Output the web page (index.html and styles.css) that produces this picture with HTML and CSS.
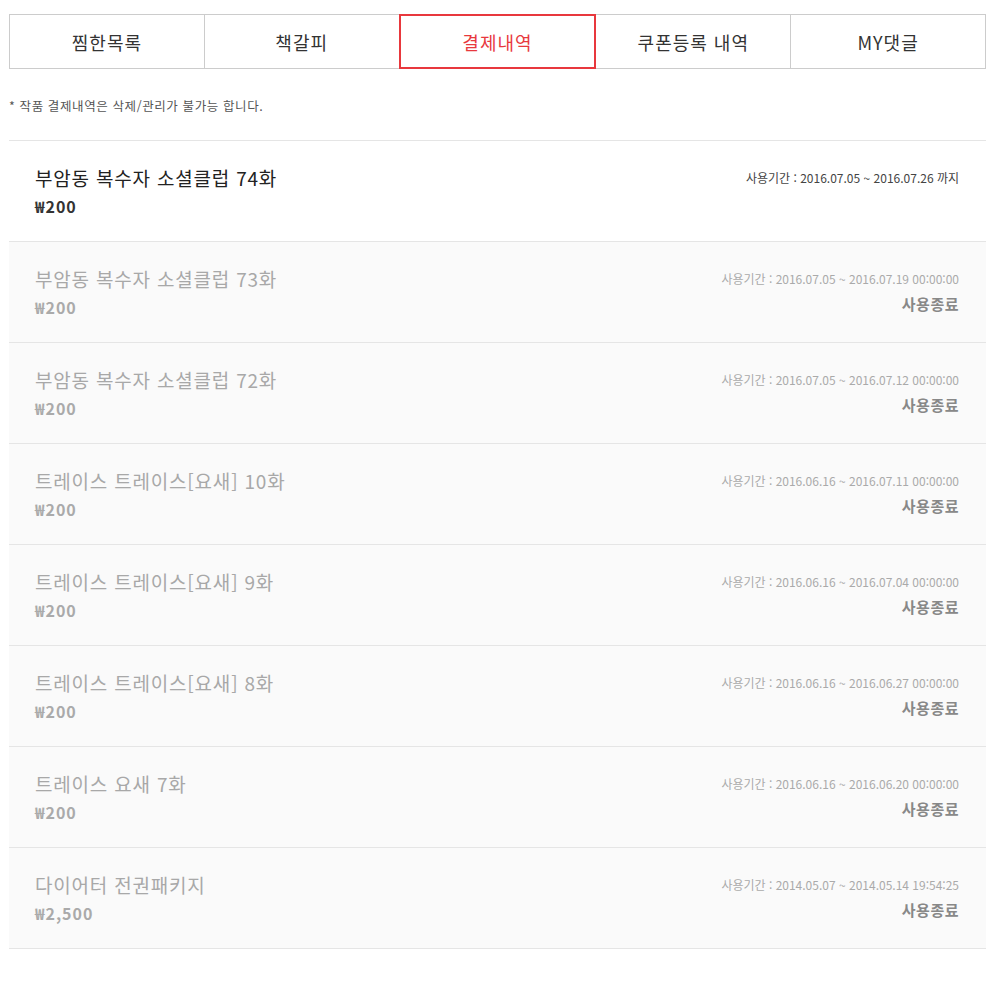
FILE: index.html
```html
<!DOCTYPE html>
<html lang="ko">
<head>
<meta charset="utf-8">
<link rel="stylesheet" href="styles.css">
</head>
<body>
<div class="wrap">
  <ul class="tabs">
    <li class="tab">찜한목록</li>
    <li class="tab">책갈피</li>
    <li class="tab active">결제내역</li>
    <li class="tab">쿠폰등록 내역</li>
    <li class="tab">MY댓글</li>
  </ul>
  <p class="note">* 작품 결제내역은 삭제/관리가 불가능 합니다.</p>
  <ul class="list">
    <li class="row current">
      <div class="left"><div class="title">부암동 복수자 소셜클럽 74화</div><div class="price">₩200</div></div>
      <div class="right"><div class="period">사용기간 : 2016.07.05 ~ 2016.07.26 까지</div></div>
    </li>
    <li class="row ended">
      <div class="left"><div class="title">부암동 복수자 소셜클럽 73화</div><div class="price">₩200</div></div>
      <div class="right"><div class="period">사용기간 : 2016.07.05 ~ 2016.07.19 00:00:00</div><div class="status">사용종료</div></div>
    </li>
    <li class="row ended">
      <div class="left"><div class="title">부암동 복수자 소셜클럽 72화</div><div class="price">₩200</div></div>
      <div class="right"><div class="period">사용기간 : 2016.07.05 ~ 2016.07.12 00:00:00</div><div class="status">사용종료</div></div>
    </li>
    <li class="row ended">
      <div class="left"><div class="title">트레이스 트레이스[요새] 10화</div><div class="price">₩200</div></div>
      <div class="right"><div class="period">사용기간 : 2016.06.16 ~ 2016.07.11 00:00:00</div><div class="status">사용종료</div></div>
    </li>
    <li class="row ended">
      <div class="left"><div class="title">트레이스 트레이스[요새] 9화</div><div class="price">₩200</div></div>
      <div class="right"><div class="period">사용기간 : 2016.06.16 ~ 2016.07.04 00:00:00</div><div class="status">사용종료</div></div>
    </li>
    <li class="row ended">
      <div class="left"><div class="title">트레이스 트레이스[요새] 8화</div><div class="price">₩200</div></div>
      <div class="right"><div class="period">사용기간 : 2016.06.16 ~ 2016.06.27 00:00:00</div><div class="status">사용종료</div></div>
    </li>
    <li class="row ended">
      <div class="left"><div class="title">트레이스 요새 7화</div><div class="price">₩200</div></div>
      <div class="right"><div class="period">사용기간 : 2016.06.16 ~ 2016.06.20 00:00:00</div><div class="status">사용종료</div></div>
    </li>
    <li class="row ended">
      <div class="left"><div class="title">다이어터 전권패키지</div><div class="price">₩2,500</div></div>
      <div class="right"><div class="period">사용기간 : 2014.05.07 ~ 2014.05.14 19:54:25</div><div class="status">사용종료</div></div>
    </li>
  </ul>
</div>
</body>
</html>
```

FILE: styles.css
```css
* { box-sizing: border-box; }
html, body { margin: 0; padding: 0; background: #fff; }
body {
  font-family: "Noto Sans CJK KR", "Noto Sans", "Liberation Sans", sans-serif;
  color: #333;
}
ul { list-style: none; margin: 0; padding: 0; }
.wrap {
  width: 977px;
  margin: 14px 0 0 9px;
}
.tabs {
  display: flex;
  height: 55px;
}
.tab {
  flex: 1;
  display: flex;
  align-items: center;
  justify-content: center;
  border: 1px solid #cccccc;
  margin-left: -1px;
  font-size: 18px;
  color: #333;
  letter-spacing: 1px;
}
.tab:first-child { margin-left: 0; }
.tab.active {
  border: 2px solid #e8383d;
  color: #e8383d;
  position: relative;
  z-index: 1;
}
.note {
  margin: 27px 0 0 0;
  height: 44px;
  font-size: 12.5px;
  color: #555;
  letter-spacing: 0.6px;
}
.list {
  border-top: 1px solid #e5e5e5;
}
.row {
  display: flex;
  justify-content: space-between;
  height: 101px;
  padding: 24px 27px 0 26px;
  border-bottom: 1px solid #e5e5e5;
}
.row.ended { background: #fafafa; }
.title {
  font-size: 19px;
  line-height: 26px;
  color: #222;
  letter-spacing: 0.8px;
}
.price {
  margin-top: 4px;
  font-size: 16px;
  line-height: 22px;
  font-weight: bold;
  color: #333;
  letter-spacing: 1px;
}
.right {
  text-align: right;
  padding-top: 3px;
}
.period {
  font-size: 12px;
  line-height: 20px;
  color: #444;
  letter-spacing: 0;
}
.status {
  margin-top: 4px;
  font-size: 15px;
  line-height: 22px;
  font-weight: bold;
  color: #888;
  letter-spacing: 0.5px;
}
.ended .title { color: #a8a8a8; }
.ended .price { color: #aaa; }
.ended .period { color: #aaa; }
```
